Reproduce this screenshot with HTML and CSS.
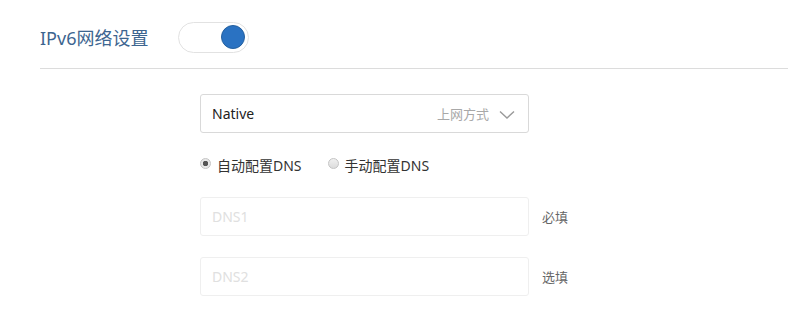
FILE: index.html
```html
<!DOCTYPE html>
<html lang="zh">
<head>
<meta charset="utf-8">
<title>IPv6网络设置</title>
<link rel="stylesheet" href="styles.css">
</head>
<body>
<div class="page">
  <div class="header">
    <h1 class="title">IPv6网络设置</h1>
    <div class="toggle"><span class="knob"></span></div>
  </div>
  <div class="form">
    <div class="select">
      <span class="select-value">Native</span>
      <span class="select-hint">上网方式</span>
      <svg class="chevron" width="16" height="10" viewBox="0 0 16 10"><path d="M1 1.5 L8 8 L15 1.5" fill="none" stroke="#9a9a9a" stroke-width="1.4"/></svg>
    </div>
    <div class="radios">
      <label class="radio"><span class="dot checked"></span>自动配置DNS</label>
      <label class="radio"><span class="dot"></span>手动配置DNS</label>
    </div>
    <div class="field">
      <div class="input"><span class="placeholder">DNS1</span></div>
      <span class="note">必填</span>
    </div>
    <div class="field">
      <div class="input"><span class="placeholder">DNS2</span></div>
      <span class="note">选填</span>
    </div>
  </div>
</div>
</body>
</html>
```
FILE: styles.css
```css
html, body {
  margin: 0;
  padding: 0;
  background: #ffffff;
}
body {
  font-family: "Noto Sans", "Noto Sans CJK SC", sans-serif;
  color: #333;
}
.page {
  width: 788px;
  height: 328px;
  overflow: hidden;
}
.header {
  margin-left: 40px;
  height: 69px;
  border-bottom: 1px solid #dcdcdc;
  display: flex;
  align-items: center;
  gap: 30px;
  box-sizing: border-box;
  padding-top: 6px;
}
.title {
  margin: 0;
  font-size: 18px;
  font-weight: normal;
  color: #3d6590;
  letter-spacing: 0;
}
.toggle {
  width: 71px;
  height: 31px;
  box-sizing: border-box;
  border: 1px solid #e2e2e2;
  border-radius: 16px;
  display: flex;
  align-items: center;
  justify-content: flex-end;
  padding-right: 3px;
  background: #fff;
}
.knob {
  width: 24px;
  height: 24px;
  border-radius: 50%;
  background: #2a72c2;
  border: 1px solid #24609f;
  box-sizing: border-box;
}
.form {
  padding-left: 200px;
  padding-top: 25px;
  display: flex;
  flex-direction: column;
}
.select {
  width: 329px;
  height: 39px;
  box-sizing: border-box;
  border: 1px solid #d9d9d9;
  border-radius: 3px;
  display: flex;
  align-items: center;
  padding: 0 13px 0 11px;
}
.select-value {
  font-size: 14px;
  color: #222;
  flex: 1;
}
.select-hint {
  font-size: 13px;
  color: #a8a8a8;
  margin-right: 10px;
}
.chevron {
  display: block;
  margin-top: 2px;
}
.radios {
  display: flex;
  gap: 26px;
  margin-top: 22px;
  height: 20px;
  align-items: center;
}
.radio {
  display: flex;
  align-items: center;
  font-size: 14px;
  color: #333;
}
.dot {
  width: 11px;
  height: 11px;
  box-sizing: border-box;
  border-radius: 50%;
  border: 1px solid #c4c4c4;
  background: linear-gradient(#f0f0f0, #dcdcdc);
  margin-right: 6px;
  position: relative;
  top: -2px;
}
.dot.checked {
  background: radial-gradient(circle, #555 0 2.5px, #e8e8e8 3px);
}
.field {
  display: flex;
  align-items: center;
}
.field + .field {
  margin-top: 21px;
}
.radios + .field {
  margin-top: 22px;
}
.input {
  width: 329px;
  height: 39px;
  box-sizing: border-box;
  border: 1px solid #efefef;
  border-radius: 3px;
  display: flex;
  align-items: center;
  padding-left: 11px;
}
.placeholder {
  font-size: 14px;
  color: #e0e0e0;
}
.note {
  margin-left: 13px;
  font-size: 13px;
  color: #666;
}
```
